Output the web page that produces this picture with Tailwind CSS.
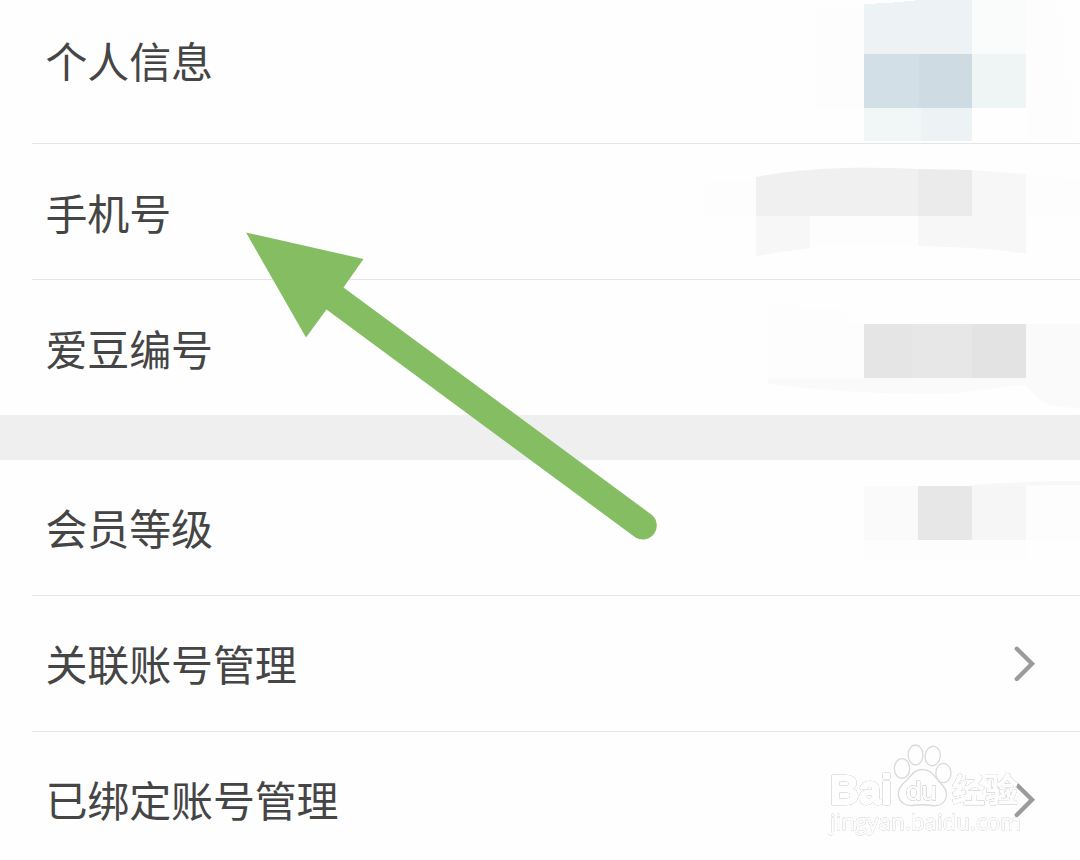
<!DOCTYPE html>
<html lang="zh-CN">
<head>
	<meta charset="UTF-8">
	<meta name="viewport" content="width=device-width, initial-scale=1.0">
	<title>个人信息</title>
	<script src="https://cdn.jsdelivr.net/npm/@tailwindcss/browser@4"></script>
</head>
<body class="bg-[#fefefe] font-['Noto_Sans_CJK_SC',sans-serif] text-[#454545]">
	<div class="relative w-[1080px] h-[860px] overflow-hidden">
		<main class="text-[42px] leading-[60px] tracking-[-0.15px]">
			<section>
				<div class="ml-8 pl-[13.5px] h-36 border-b border-[#e5e5e5] flex justify-between">
					<span class="pt-[30px]">个人信息</span>
					<svg class="w-[380px] h-[143px]" viewBox="700 0 380 143" shape-rendering="crispEdges">
						<path fill="#fdfdfd" d="M816 8h48v101h-48zM1026 0h29v16h9v64h8v58h-46z"/>
						<path fill="#edf2f5" d="M864 4l24-1 32-3h52v54H864z"/>
						<path fill="#fafcfc" d="M972 0h54v54h-54z"/>
						<path fill="#d2dfe7" d="M864 54h55v54h-55z"/>
						<path fill="#cfdbe3" d="M919 54h53v54h-53z"/>
						<path fill="#eff5f5" d="M972 54h54v54h-54z"/>
						<path fill="#f1f6f6" d="M864 108h57v33h-57z"/>
						<path fill="#edf2f5" d="M921 108h51v33h-51z"/>
					</svg>
				</div>
				<div class="ml-8 pl-[13.5px] h-[136px] border-b border-[#e5e5e5] flex justify-between">
					<span class="pt-[38px]">手机号</span>
					<svg class="w-[380px] h-[135px]" viewBox="700 144 380 135">
						<path fill="#fdfdfd" d="M705 182h51v34h-51zM810 216h110v30H810zM1026 175l54 4v38h-54z"/>
						<path fill="#f0f0f0" d="M756 177C800 168 860 166 918 169v47H756z"/>
						<path fill="#ebebeb" d="M918 169l54 1v46h-54z"/>
						<path fill="#f7f7f7" d="M756 216h54v32q-30 4-54 8zM918 216h54v32l-54-2zM972 170l54 4v80q-28-5-54-6z"/>
					</svg>
				</div>
				<div class="ml-8 pl-[13.5px] h-[135px] flex justify-between">
					<span class="pt-[38px]">爱豆编号</span>
					<svg class="w-[380px] h-[135px]" viewBox="700 280 380 135">
						<path fill="#fdfdfd" d="M768 304h32v6h47v14h17v54h-96z"/>
						<path fill="#fafafa" d="M768 378h258v-54h54v85l-30-4q-12-5-24-20-32 2-66 8-96 3-192-9z"/>
						<path fill="#e5e5e5" d="M864 324h48v54h-48z"/>
						<path fill="#e7e7e7" d="M912 324h60v54h-60z"/>
						<path fill="#e3e3e3" d="M972 324h54v54h-54z"/>
					</svg>
				</div>
			</section>

			<div class="h-[45px] bg-[#efefef]"></div>

			<section>
				<div class="ml-8 pl-[13.5px] h-[136px] border-b border-[#e5e5e5] flex justify-between">
					<span class="pt-[37px]">会员等级</span>
					<svg class="w-[380px] h-[135px]" viewBox="700 460 380 135">
						<path fill="#fdfdfd" d="M864 540h162v20H864zM1026 486h54v54h-54z"/>
						<path fill="#fafafa" d="M864 486h54v54h-54z"/>
						<path fill="#e7e7e7" d="M918 486h54v54h-54z"/>
						<path fill="#f6f6f6" d="M972 486h54v54h-54z"/>
						<path fill="#f7f7f7" d="M972 485q54-4 108-4v4q-54 0-108 2z"/>
					</svg>
				</div>
				<div class="ml-8 pl-[13.5px] h-[136px] border-b border-[#e5e5e5] flex justify-between">
					<span class="pt-[37px]">关联账号管理</span>
					<svg class="mt-[48px] mr-11 w-6 h-10" viewBox="0 0 24 40" fill="none" stroke="#9b9b9b" stroke-width="4.4" stroke-linecap="round">
						<path d="M4.8 4.8L20 19.8L4.8 35"/>
					</svg>
				</div>
				<div class="ml-8 pl-[13.5px] h-32 flex justify-between">
					<span class="pt-[37px]">已绑定账号管理</span>
					<svg class="mt-[48px] mr-11 w-6 h-10" viewBox="0 0 24 40" fill="none" stroke="#9b9b9b" stroke-width="4.4" stroke-linecap="round">
						<path d="M4.8 4.8L20 19.8L4.8 35"/>
					</svg>
				</div>
			</section>
		</main>

		<!-- Arrow pointing at the phone number row -->
		<svg class="absolute inset-0 w-[1080px] h-[860px]" viewBox="0 0 1080 860">
			<path fill="#85be62" d="M246 232.500L363.500 259L343.500 287.500L652 515A14 14 0 0 1 635.500 537.500L326.500 309.500L306 337.500Z"/>
		</svg>

		<!-- Watermark -->
		<svg class="absolute left-[820px] top-[738px] w-[215px] h-[110px]" viewBox="820 738 215 110" fill="#fefefe" stroke="#fefefe" stroke-linejoin="round">
			<text class="font-['Liberation_Sans',sans-serif] font-bold [filter:drop-shadow(0_0_0.7px_#8a8a8a)]" x="830" y="804" font-size="41" stroke-width="2.400" textLength="62" lengthAdjust="spacingAndGlyphs">Bai</text>
			<g stroke="#dadada" stroke-width="1.300">
				<ellipse cx="902" cy="768.500" rx="7.700" ry="9.900"/>
				<ellipse cx="915.500" cy="755" rx="7.400" ry="10"/>
				<ellipse cx="932.700" cy="756" rx="7.600" ry="9.800" transform="rotate(8 932.7 756)"/>
				<ellipse cx="943.400" cy="773" rx="7.600" ry="9.700"/>
				<path d="M922 769.500C914 769.500 911 776 907 780C902 784 897 789 898.500 796C900 803 906 806 912 805.500C919 804.500 926 804.500 932 805.500C940 807 946 802 946.500 795C947 788 941 784 937 779C933 774 930 769.500 922 769.500Z"/>
			</g>
			<text class="font-['Liberation_Sans',sans-serif] [filter:drop-shadow(0_0_0.7px_#777)]" x="906" y="799.500" font-size="26" stroke-width="1" textLength="31" lengthAdjust="spacingAndGlyphs">du</text>
			<text class="font-['Noto_Sans_CJK_SC',sans-serif] font-bold [filter:drop-shadow(0_0_0.7px_#8a8a8a)]" x="952" y="802" font-size="33" stroke-width="1">经验</text>
			<text class="font-['Open_Sans',sans-serif] [filter:drop-shadow(0_0_0.7px_#a0a0a0)]" x="830" y="830" font-size="22" stroke-width="0.800" textLength="191" lengthAdjust="spacingAndGlyphs">jingyan.baidu.com</text>
		</svg>
	</div>
</body>
</html>
